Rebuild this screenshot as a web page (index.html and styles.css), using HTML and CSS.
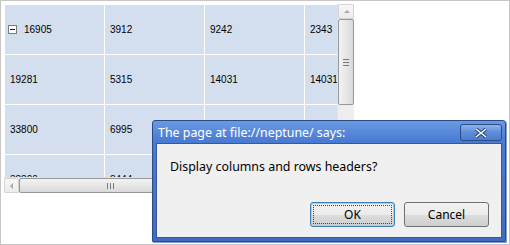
FILE: index.html
```html
<!DOCTYPE html>
<html lang="en">
<head>
    <meta charset="UTF-8">
    <title>Pivot grid</title>
    <link rel="stylesheet" href="styles.css">
</head>
<body>
    <div class="frame">
        <div class="view">
            <div class="grid">
                <div class="cell"><span class="toggle"></span>16905</div>
                <div class="cell">3912</div>
                <div class="cell">9242</div>
                <div class="cell">2343</div>

                <div class="cell">19281</div>
                <div class="cell">5315</div>
                <div class="cell">14031</div>
                <div class="cell">14031</div>

                <div class="cell">33800</div>
                <div class="cell">6995</div>
                <div class="cell"></div>
                <div class="cell"></div>

                <div class="cell">38800</div>
                <div class="cell">8444</div>
                <div class="cell"></div>
                <div class="cell"></div>
            </div>
            <div class="vscroll">
                <div class="sb-btn up"></div>
                <div class="thumb thumb-v"><span class="grip"></span></div>
            </div>
            <div class="hscroll">
                <div class="sb-btn left"></div>
                <div class="thumb thumb-h"><span class="grip"></span></div>
            </div>
            <div class="corner"></div>
        </div>

        <!-- browser alert sits over the grid -->
        <div class="dialog">
            <div class="dialog-title">
                <span>The page at file://neptune/ says:</span>
                <button class="close">
                    <svg width="14" height="10" viewBox="0 0 14 10">
                        <path d="M2 1 L12 9 M12 1 L2 9" stroke="#233f73" stroke-width="3.4" fill="none"/>
                        <path d="M2 1 L12 9 M12 1 L2 9" stroke="#ffffff" stroke-width="1.6" fill="none"/>
                    </svg>
                </button>
            </div>
            <div class="dialog-body">
                <p class="message">Display columns and rows headers?</p>
                <div class="actions">
                    <button class="btn default"><span>OK</span></button>
                    <button class="btn">Cancel</button>
                </div>
            </div>
        </div>
    </div>
</body>
</html>
```

FILE: styles.css
```css
body {
    margin: 0;
    background: #fff;
}
.frame {
    position: relative;
    width: 510px;
    height: 245px;
    box-sizing: border-box;
    border: 1px solid #c6c6c6;
    padding: 3px;
}
.view {
    display: grid;
    grid-template-columns: 333px 17px;
    grid-template-rows: 173px 16px;
    width: 350px;
}
.grid {
    display: grid;
    grid-template-columns: repeat(4, 99px);
    grid-auto-rows: 49px;
    gap: 1px;
    padding: 1px 0 0 1px;
    overflow: hidden;
    background: #fff;
}
.cell {
    display: flex;
    align-items: center;
    padding-left: 5px;
    background: #d3dfee;
    font-family: "Liberation Sans", Arial, sans-serif;
    font-size: 10px;
    color: #000;
    white-space: nowrap;
}
.toggle {
    position: relative;
    width: 7px;
    height: 7px;
    margin: 0 7px 0 -2px;
    border: 1px solid #7b7b7b;
    background: #fff;
}
.toggle:after {
    content: "";
    position: absolute;
    left: 1px;
    top: 3px;
    width: 5px;
    height: 1px;
    background: #222;
}

/* scrollbars */
.vscroll {
    display: flex;
    flex-direction: column;
    background: #eeeeee;
    border-left: 1px solid #e2e2e2;
}
.hscroll {
    display: flex;
    background: #eeeeee;
    border-top: 1px solid #e2e2e2;
}
.corner {
    background: #f0f0f0;
}
.sb-btn {
    position: relative;
    box-sizing: border-box;
    border: 1px solid #d4d4d4;
    border-radius: 2px;
    background: linear-gradient(#f7f7f7, #ececec);
}
.sb-btn.up {
    height: 15px;
}
.sb-btn.left {
    width: 15px;
}
.sb-btn.up:after {
    content: "";
    position: absolute;
    left: 5px;
    top: 5px;
    border-left: 3px solid transparent;
    border-right: 3px solid transparent;
    border-bottom: 3px solid #a8a8a8;
}
.sb-btn.left:after {
    content: "";
    position: absolute;
    left: 5px;
    top: 4px;
    border-top: 3px solid transparent;
    border-bottom: 3px solid transparent;
    border-right: 3px solid #a8a8a8;
}
.thumb {
    display: flex;
    align-items: center;
    justify-content: center;
    box-sizing: border-box;
    border: 1px solid #979797;
    border-radius: 2px;
}
.thumb-v {
    height: 86px;
    background: linear-gradient(90deg, #f3f3f3, #e4e4e4 60%, #d8d8d8);
}
.thumb-h {
    width: 200px;
    background: linear-gradient(#f3f3f3, #e4e4e4 60%, #d8d8d8);
}
.thumb-v .grip {
    width: 6px;
    height: 7px;
    background: repeating-linear-gradient(#7b7b7b 0 1px, transparent 1px 3px);
}
.thumb-h .grip {
    width: 7px;
    height: 6px;
    margin-left: -18px;
    background: repeating-linear-gradient(90deg, #7b7b7b 0 1px, transparent 1px 3px);
}

/* alert dialog */
.dialog {
    position: absolute;
    left: 151px;
    top: 119px;
    width: 354px;
    height: 122px;
    box-sizing: border-box;
    display: flex;
    flex-direction: column;
    border: 1px solid #2c4a86;
    border-radius: 3px 3px 0 0;
    background: linear-gradient(#6a9ae2, #4a7bd3 20px, #3f6cc0);
    box-shadow: 1px 1px 0 #8aa0c8;
}
.dialog-title {
    display: flex;
    align-items: center;
    justify-content: space-between;
    height: 22px;
    padding: 0 3px 0 5px;
    font-family: "Noto Sans", "Open Sans", sans-serif;
    font-size: 12.4px;
    color: #fff;
}
.close {
    display: flex;
    align-items: center;
    justify-content: center;
    width: 42px;
    height: 17px;
    margin-top: 1px;
    padding: 0;
    border: 1px solid #2d4b85;
    border-radius: 3px;
    background: linear-gradient(#8fb3ec, #5f8cda 50%, #4d7ccd);
}
.dialog-body {
    flex: 1;
    display: flex;
    flex-direction: column;
    margin: 0 3px 3px 3px;
    border: 1px solid #38589a;
    background: #f0f0f0;
    font-family: "Noto Sans", "Open Sans", sans-serif;
    font-size: 12.4px;
    color: #000;
}
.message {
    margin: 15px 0 0 13px;
    line-height: 16px;
}
.actions {
    margin-top: auto;
    display: flex;
    justify-content: flex-end;
    gap: 9px;
    padding: 0 12px 10px 0;
}
.btn {
    width: 85px;
    height: 25px;
    padding: 0;
    box-sizing: border-box;
    border: 1px solid #707070;
    border-radius: 3px;
    background: linear-gradient(#f2f2f2, #ebebeb 50%, #dddddd 51%, #cfcfcf);
    font-family: inherit;
    font-size: 12px;
    color: #000;
}
.btn.default {
    border-color: #3c7fb1;
    box-shadow: inset 0 0 0 1px #9fd2f0;
    padding: 2px;
}
.btn.default span {
    display: flex;
    align-items: center;
    justify-content: center;
    height: 100%;
    border: 1px dotted #444;
    box-sizing: border-box;
}
```
